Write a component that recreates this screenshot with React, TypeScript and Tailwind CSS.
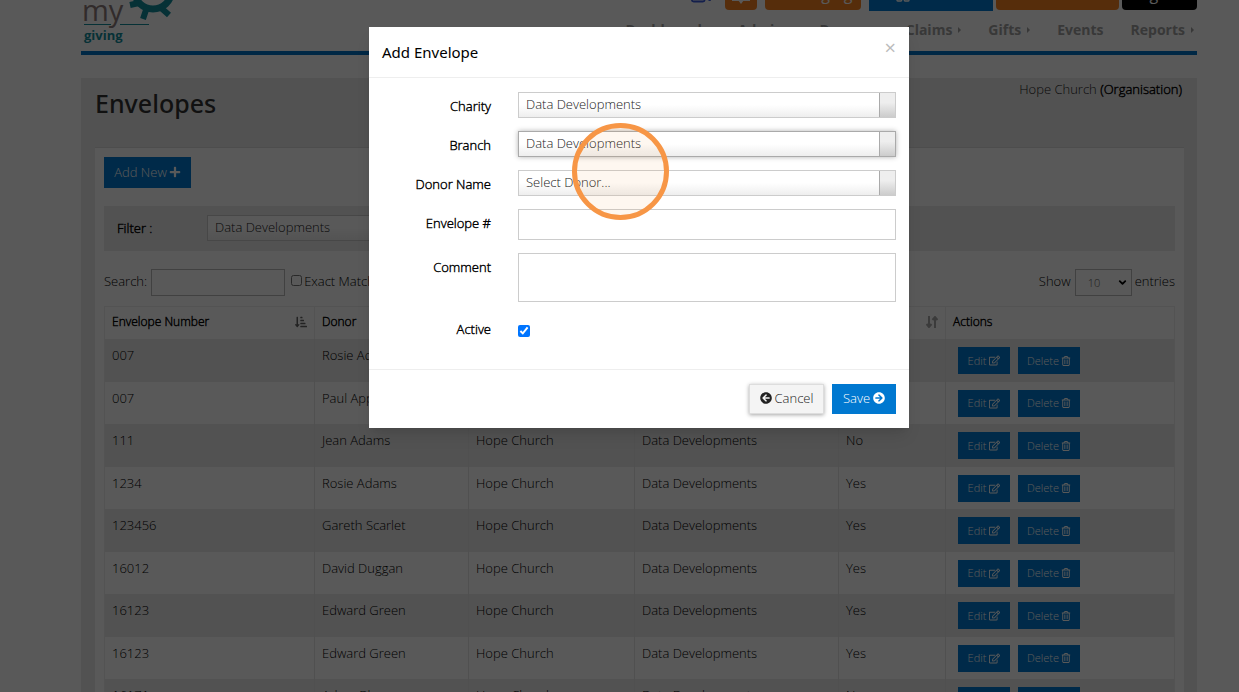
import { useId, type ReactNode } from 'react'
import { FaArrowCircleLeft, FaArrowCircleRight, FaPlus, FaRegEdit, FaSortAmountDownAlt } from 'react-icons/fa'
import { FaRegTrashCan } from 'react-icons/fa6'
import { ChevronDown, LayoutGrid, Video } from 'lucide-react'

const rows = [
  ['007', 'Rosie Adams', 'Hope Church', 'Data Developments', 'Yes'],
  ['007', 'Paul Appleby', 'Hope Church', 'Data Developments', 'Yes'],
  ['111', 'Jean Adams', 'Hope Church', 'Data Developments', 'No'],
  ['1234', 'Rosie Adams', 'Hope Church', 'Data Developments', 'Yes'],
  ['123456', 'Gareth Scarlet', 'Hope Church', 'Data Developments', 'Yes'],
  ['16012', 'David Duggan', 'Hope Church', 'Data Developments', 'Yes'],
  ['16123', 'Edward Green', 'Hope Church', 'Data Developments', 'Yes'],
  ['16123', 'Edward Green', 'Hope Church', 'Data Developments', 'Yes'],
  ['16171', 'Adam Blogg', 'Hope Church', 'Data Developments', 'No'],
]

const columns = ['Envelope Number', 'Donor', 'Branch', 'Charity', 'Active']

const menu = [
  { name: 'Dashboard', sub: true },
  { name: 'Admin', sub: true },
  { name: 'Donors', sub: true },
  { name: 'Claims', sub: true },
  { name: 'Gifts', sub: true },
  { name: 'Events', sub: false },
  { name: 'Reports', sub: true },
]

// the light face thickened a little, used for labels and headings
const strong = '[-webkit-text-stroke:0.4px_currentColor]'

export default function App() {
  return (
    <div className="relative h-screen overflow-hidden bg-white pl-[39px] font-['Open_Sans','Noto_Sans',sans-serif] text-[13px] leading-5 font-light text-black">
      <div className="mx-auto w-[93%]">
        <Header />
        <main className="mt-[23px] bg-[#ebebeb] pr-[13px] pb-4 pl-[14px]">
          <div className="flex h-[69px] justify-between">
            <h1 className="pt-[7px] font-['Noto_Sans'] text-[25px] leading-9 font-medium text-[#333]">Envelopes</h1>
            <p className="pt-px pr-[2px] text-[#222]">
              Hope Church <span className={`text-black ${strong}`}>(Organisation)</span>
            </p>
          </div>
          <section className="border-t border-[#ddd] bg-white px-[9px] pt-[9px]">
            <button className="flex h-[31px] w-[87px] items-center justify-center gap-[2px] bg-[#0078d0] pb-px text-white">
              Add New <FaPlus size={12} />
            </button>
            <div className="mt-[18px] flex h-[45px] items-center bg-[#ebebeb] px-[13px] pb-[2px]">
              <label htmlFor="filter" className={`w-[90px] ${strong}`}>Filter :</label>
              <DropDown id="filter" value="Data Developments" className="w-[378px]" />
            </div>
            <TableControls />
            <EnvelopeTable />
          </section>
        </main>
      </div>

      <div className="absolute inset-0 bg-black/65 pl-[39px]">
        <AddEnvelope />
      </div>
    </div>
  )
}

function Header() {
  return (
    <header className="flex h-[55px] items-end justify-between overflow-hidden border-b-4 border-[#0072c6]">
      <Logo />
      <div className="flex flex-col items-end">
        <div className="flex h-8 items-end gap-[3px] text-white">
          <Video size={22} className="mr-[10px] mb-1 text-[#3b5bdb]" />
          <button className="mr-[5px] mb-px flex h-8 w-8 items-center justify-center rounded-b-sm bg-[#f58220]" aria-label="Notifications">
            <svg width="20" height="20" viewBox="0 0 20 20" fill="none" stroke="currentColor" strokeWidth="2">
              <path d="M2 3H18V16H2Z" />
              <path d="M7 16H13L10 20Z" fill="currentColor" stroke="none" />
            </svg>
          </button>
          <button className="mr-[5px] mb-px h-8 w-24 rounded-b-sm bg-[#f58220] text-base font-normal">Messaging</button>
          <button className="h-8 w-[124px] bg-[#0078d0]" aria-label="Organisations">
            <LayoutGrid size={16} className="ml-[26px]" />
          </button>
          <button className="mb-px h-8 w-[123px] rounded-b-sm bg-[#f58220]" aria-label="Account" />
          <button className="mb-px h-8 w-[75px] rounded-b-sm bg-black text-base font-normal">Log out</button>
        </div>
        <nav className="flex h-10 gap-[27px] pt-[9px] pr-[3px] text-sm font-bold text-[#a0a0a0]">
          {menu.map(({ name, sub }) => (
            <a key={name} href="#" className="flex items-center self-start">
              {name}
              {sub && (
                <svg width="3" height="6" viewBox="0 0 3 6" className="ml-[6px]">
                  <path d="M0 0L3 3L0 6Z" fill="currentColor" />
                </svg>
              )}
            </a>
          ))}
        </nav>
      </div>
    </header>
  )
}

function Logo() {
  return (
    <svg width="100" height="51" viewBox="0 0 100 51" aria-label="my giving">
      <g fill="none" stroke="#128c9c" strokeWidth="7">
        <path d="M54 -8 A18 17 0 0 0 90 -8" />
        <path d="M58 3 L49 5 M66 7 L62 19 M79 7 L88 15" strokeWidth="6" />
      </g>
      <path d="M3 24.500H30M39 24.500H68" stroke="#128c9c" />
      <text x="1" y="21" fontSize="29" fontWeight="400" fill="#8c7b7b">my</text>
      <text x="3" y="40" fontSize="13" fontWeight="700" fill="#128c9c">giving</text>
    </svg>
  )
}

function TableControls() {
  return (
    <div className="mt-[17px] mb-[9px] flex h-[29px] items-center">
      <label htmlFor="search" className="pb-[3px]">Search:</label>
      <input id="search" className="ml-1 h-[27px] w-[134px] border border-[#bbb]" />
      <input id="exact" type="checkbox" className="mb-1 ml-[6px] size-[11px]" />
      <label htmlFor="exact" className="ml-[2px] pb-[3px]">Exact Match</label>
      <label htmlFor="entries" className="ml-auto pb-[3px]">Show</label>
      <span className="relative mr-[3px] ml-1 flex h-[27px] w-[57px] items-center border border-[#bbb]">
        <select id="entries" className="w-full appearance-none pl-3 text-[11px] text-[#555]">
          <option>10</option>
        </select>
        <ChevronDown size={11} strokeWidth={4} className="pointer-events-none absolute right-[3px]" />
      </span>
      <span className="pb-[3px]">entries</span>
    </div>
  )
}

function SortIcon() {
  return (
    <svg width="12" height="12" viewBox="0 0 12 12" fill="none" stroke="#aaa" strokeWidth="2">
      <path d="M3 0V10M0.500 8L3 11L5.500 8M9 12V2M6.500 4L9 1L11.500 4" />
    </svg>
  )
}

function EnvelopeTable() {
  return (
    <table className="w-full table-fixed border border-[#eee] text-left">
      <colgroup>
        <col className="w-[210px]" />
        <col className="w-[154px]" />
        <col className="w-[166px]" />
        <col className="w-[204px]" />
        <col className="w-[107px]" />
        <col />
      </colgroup>
      <thead>
        <tr className="h-8 text-xs">
          {columns.map((name, i) => (
            <th key={name} className="border-r border-[#eee] px-[7px] pb-px font-light">
              <span className={`flex items-center justify-between ${strong}`}>
                {name}
                {i === 0 ? <FaSortAmountDownAlt size={12} className="text-[#666]" /> : <SortIcon />}
              </span>
            </th>
          ))}
          <th className={`px-[7px] pb-px font-light ${strong}`}>Actions</th>
        </tr>
      </thead>
      <tbody>
        {rows.map((row, i) => (
          <tr key={i} className="odd:h-[43px] odd:bg-[#ebebeb] even:h-[42px]">
            {row.map((cell, j) => (
              <td key={j} className="border-r border-[#e6e6e6] px-[7px] pt-[6px] align-top">{cell}</td>
            ))}
            <td className="px-3 pt-px">
              <div className="flex gap-2 text-[11px] text-white">
                <button className="flex h-[27px] w-[52px] items-center justify-center gap-[3px] bg-[#0078d0]">
                  Edit <FaRegEdit size={11} />
                </button>
                <button className="flex h-[27px] w-[62px] items-center justify-center gap-[2px] bg-[#0078d0]">
                  Delete <FaRegTrashCan size={10} />
                </button>
              </div>
            </td>
          </tr>
        ))}
      </tbody>
    </table>
  )
}

type DropDownProps = { id: string; value: string; focused?: boolean; className?: string }

function DropDown({ id, value, focused, className = '' }: DropDownProps) {
  return (
    <span className={`flex h-[26px] border bg-linear-to-b from-white from-50% to-[#eee] ${focused ? 'border-[#aaa] shadow-[0_0_5px_rgba(0,0,0,0.3)]' : 'border-[#ccc]'} ${className}`}>
      <select id={id} className="min-w-0 flex-1 appearance-none px-[7px] pb-[2px] text-[#222] outline-none">
        <option>{value}</option>
      </select>
      <span className="w-4 border-l border-[#aaa] bg-linear-to-b from-[#eee] from-40% to-[#ccc]" />
    </span>
  )
}

function Field({ label, children }: { label: string; children: (id: string) => ReactNode }) {
  const id = useId()
  return (
    <div className="grid grid-cols-[122px_1fr] gap-x-[27px]">
      <label htmlFor={id} className={`pt-1 text-right ${strong}`}>{label}</label>
      {children(id)}
    </div>
  )
}

function AddEnvelope() {
  return (
    <div role="dialog" aria-label="Add Envelope" className="relative mx-auto mt-[27px] w-[540px] bg-white shadow-lg">
      <div className="flex h-[51px] justify-between border-b border-[#eee] px-[13px]">
        <h2 className="pt-[13px] font-['Noto_Sans'] text-[15px] leading-6 font-normal">Add Envelope</h2>
        <button aria-label="Close" className="self-start pt-[11px] text-xl leading-5 font-normal text-[#bbb]">×</button>
      </div>
      <form className="flex flex-col gap-[13px] pt-[14px] pr-[13px]">
        <Field label="Charity">{(id) => <DropDown id={id} value="Data Developments" />}</Field>
        <Field label="Branch">{(id) => <DropDown id={id} value="Data Developments" focused />}</Field>
        <Field label="Donor Name">{(id) => <DropDown id={id} value="Select Donor..." />}</Field>
        <Field label="Envelope #">{(id) => <input id={id} className="h-[31px] border border-[#ccc] px-2" />}</Field>
        <Field label="Comment">{(id) => <textarea id={id} className="h-[49px] resize-none border border-[#ccc] px-2" />}</Field>
        <Field label="Active">{(id) => <input id={id} type="checkbox" defaultChecked className="mt-[10px] size-3 accent-[#0075ff]" />}</Field>
      </form>
      <div className="mt-[30px] flex h-[59px] items-center justify-end gap-2 border-t border-[#eee] pr-[13px]">
        <button className="flex h-[30px] w-[75px] items-center justify-center gap-[3px] border border-[#ddd] bg-[#f4f4f4] pb-[2px] text-[#222] shadow-[0_1px_4px_rgba(0,0,0,0.35)]">
          <FaArrowCircleLeft size={12} /> Cancel
        </button>
        <button className="flex h-[30px] w-16 items-center justify-center gap-[3px] bg-[#0078d0] pb-[2px] text-white">
          Save <FaArrowCircleRight size={12} />
        </button>
      </div>
      <div className="pointer-events-none absolute top-24 left-[203px] size-[97px] rounded-full border-[5px] border-[#f79646] bg-[#f79646]/8" />
    </div>
  )
}
